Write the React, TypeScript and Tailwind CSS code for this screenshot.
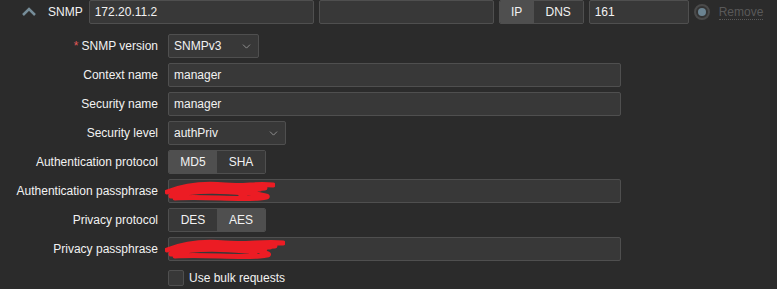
import { ChevronDown } from 'lucide-react'

const field = 'h-[24px] bg-[#383838] border border-[#4f4f4f] rounded-[2px] px-[5px] text-[12px] text-[#f2f2f2] flex items-center'

const Row = ({ label, req, children }: { label: string; req?: boolean; children: React.ReactNode }) => (
  <div className="flex items-center h-[24px]">
    <div className="w-[158px] text-right text-[12px] text-[#f2f2f2] pr-0">
      {req && <span className="text-[#e45959] mr-[3px]">*</span>}
      {label}
    </div>
    <div className="ml-[10px] flex items-center">{children}</div>
  </div>
)

const Toggle = ({ a, b, sel }: { a: string; b: string; sel: 0 | 1 }) => (
  <div className="flex h-[24px] border border-[#4f4f4f] rounded-[2px] overflow-hidden text-[12px] text-[#f2f2f2]">
    <div className={`w-[48px] flex items-center justify-center ${sel === 0 ? 'bg-[#4f4f4f]' : 'bg-[#383838]'}`}>{a}</div>
    <div className={`w-[48px] flex items-center justify-center ${sel === 1 ? 'bg-[#4f4f4f]' : 'bg-[#383838]'}`}>{b}</div>
  </div>
)

const Select = ({ value, w }: { value: string; w: string }) => (
  <div className={`${field} ${w} justify-between`}>
    <span>{value}</span>
    <ChevronDown size={13} strokeWidth={1.5} className="text-[#a0a0a0]" />
  </div>
)

// red marker over the hidden passphrase
const Scribble = ({ w }: { w: number }) => (
  <svg width={w} height="24" viewBox={`0 0 ${w} 24`} className="absolute left-[-4px] top-[-1px]">
    <path
      d={`M2 13 C20 6, 40 4, 60 6 S${w - 20} 4, ${w - 2} 6 M6 17 C30 10, 60 12, 80 14 S${w - 30} 10, ${w - 10} 9 M10 19 C40 17, 70 21, 95 19 S${w - 40} 14, ${w - 20} 12 M20 9 C40 3, 60 8, 80 10 S${w - 50} 12, ${w - 30} 16 M8 14 C30 8, 50 10, 70 12 S${w - 40} 8, ${w - 15} 10`}
      stroke="#ec1c24"
      strokeWidth="5"
      fill="none"
      strokeLinecap="round"
    />
  </svg>
)

export default function App() {
  return (
    <div className="w-[777px] h-[289px] bg-[#2b2b2b] overflow-hidden" style={{ fontFamily: '"Liberation Sans", Arial, sans-serif' }}>
      <div className="flex items-center h-[24px]">
        <svg width="16" height="10" viewBox="0 0 16 10" className="ml-[21px]">
          <path d="M2 8 L8 2 L14 8" stroke="#768d99" strokeWidth="2.5" fill="none" />
        </svg>
        <span className="ml-[11px] text-[12px] text-[#f2f2f2]">SNMP</span>
        <div className={`${field} ml-[6px] w-[225px]`}>172.20.11.2</div>
        <div className={`${field} ml-[5px] w-[175px]`}></div>
        <div className="ml-[5px] flex h-[24px] border border-[#4f4f4f] rounded-[2px] overflow-hidden text-[12px] text-[#f2f2f2]">
          <div className="w-[34px] bg-[#4f4f4f] flex items-center justify-center">IP</div>
          <div className="w-[49px] bg-[#383838] flex items-center justify-center">DNS</div>
        </div>
        <div className={`${field} ml-[5px] w-[100px]`}>161</div>
        <div className="ml-[5px] w-[16px] h-[16px] rounded-full border-2 border-[#4a4a4a] bg-[#333] flex items-center justify-center">
          <div className="w-[8px] h-[8px] rounded-full bg-[#6b8391]" />
        </div>
        <span className="ml-[9px] text-[12px] text-[#595959] border-b border-dotted border-[#595959] leading-[14px]">Remove</span>
      </div>

      <div className="mt-[10px] flex flex-col gap-[5px]">
        <Row label="SNMP version" req>
          <Select value="SNMPv3" w="w-[91px]" />
        </Row>
        <Row label="Context name">
          <div className={`${field} w-[453px]`}>manager</div>
        </Row>
        <Row label="Security name">
          <div className={`${field} w-[453px]`}>manager</div>
        </Row>
        <Row label="Security level">
          <Select value="authPriv" w="w-[118px]" />
        </Row>
        <Row label="Authentication protocol">
          <Toggle a="MD5" b="SHA" sel={0} />
        </Row>
        <Row label="Authentication passphrase">
          <div className={`${field} w-[453px] relative`}>
            <Scribble w={110} />
          </div>
        </Row>
        <Row label="Privacy protocol">
          <Toggle a="DES" b="AES" sel={1} />
        </Row>
        <Row label="Privacy passphrase">
          <div className={`${field} w-[453px] relative`}>
            <Scribble w={120} />
          </div>
        </Row>
        <div className="flex items-center h-[24px]">
          <div className="ml-[168px] w-[16px] h-[16px] border border-[#4f4f4f] rounded-[2px] bg-[#383838]" />
          <span className="ml-[5px] text-[12px] text-[#f2f2f2]">Use bulk requests</span>
        </div>
      </div>
    </div>
  )
}
